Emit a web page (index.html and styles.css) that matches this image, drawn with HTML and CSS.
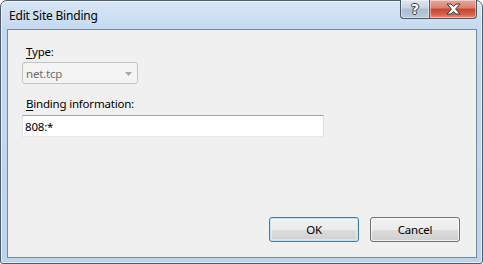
FILE: index.html
```html
<!DOCTYPE html>
<html>
<head>
<meta charset="utf-8">
<link rel="stylesheet" href="styles.css">
</head>
<body>
<div class="window">
  <div class="titlebar">
    <span class="title">Edit Site Binding</span>
    <div class="controls">
      <div class="ctl help"><span class="help-glyph">?</span></div>
      <div class="ctl close">
        <svg width="15" height="12" viewBox="0 0 15 12">
          <polygon points="1,1 5,1 7.5,3.6 10,1 14,1 9.6,6 14,11 10,11 7.5,8.4 5,11 1,11 5.4,6" fill="#ffffff" stroke="#3b3b3b" stroke-width="1" stroke-linejoin="round"/>
        </svg>
      </div>
    </div>
  </div>
  <div class="client">
    <div class="form">
      <label class="label"><u>T</u>ype:</label>
      <div class="select">
        <span>net.tcp</span>
        <svg class="arrow" width="7" height="4" viewBox="0 0 7 4"><polygon points="0,0 7,0 3.5,4" fill="#a8a8a8"/></svg>
      </div>
      <label class="label label-bind"><u>B</u>inding information:</label>
      <div class="input">808:*</div>
    </div>
    <div class="buttons">
      <div class="btn btn-default">OK</div>
      <div class="btn">Cancel</div>
    </div>
  </div>
</div>
</body>
</html>
```
FILE: styles.css
```css
html, body {
  margin: 0;
  padding: 0;
  background: #ffffff;
}
body {
  font-family: "Noto Sans", "Open Sans", sans-serif;
  font-size: 11.5px;
  letter-spacing: -0.2px;
  color: #000;
}
.window {
  box-sizing: border-box;
  width: 483px;
  height: 264px;
  border: 1px solid #4f5d6e;
  border-radius: 7px 7px 3px 3px;
  background: linear-gradient(180deg, #d7e6f6 0px, #c4d9ef 30px, #bcd4ee 100%);
  box-shadow: inset 0 0 0 1px rgba(255,255,255,0.6);
  padding: 0 5px 5px 6px;
  display: flex;
  flex-direction: column;
}
.titlebar {
  height: 28px;
  display: flex;
  justify-content: space-between;
  align-items: flex-start;
}
.title {
  margin-top: 7px;
  margin-left: 2px;
  font-size: 12px;
  line-height: 16px;
  color: #000;
}
.controls {
  display: flex;
  margin-top: -1px;
}
.ctl {
  height: 19px;
  box-sizing: border-box;
  border: 1px solid #4b5868;
  border-top: none;
  display: flex;
  align-items: center;
  justify-content: center;
  box-shadow: inset 0 0 0 1px rgba(255,255,255,0.45);
}
.help {
  width: 29px;
  border-right: none;
  border-radius: 0 0 0 4px;
  background: linear-gradient(180deg, #dde7f2 0%, #c7d5e4 45%, #aebed1 50%, #b9cadc 100%);
}
.close {
  width: 48px;
  border-radius: 0 0 4px 0;
  background: linear-gradient(180deg, #e9a99c 0%, #dc7f6c 45%, #c8432f 50%, #d3614c 80%, #e3937f 100%);
}
.help-glyph {
  font-family: "DejaVu Sans", sans-serif;
  font-weight: bold;
  font-size: 14px;
  line-height: 14px;
  letter-spacing: 0;
  color: #ffffff;
  text-shadow: -1px 0 #3b3b3b, 1px 0 #3b3b3b, 0 -1px #3b3b3b, 0 1px #3b3b3b;
}
.client {
  flex: 1;
  background: #f0f0f0;
  border: 1px solid #7a8797;
  display: flex;
  flex-direction: column;
  justify-content: space-between;
}
.form {
  display: flex;
  flex-direction: column;
  align-items: flex-start;
  padding: 14px 0 0 14px;
}
.label {
  display: block;
  margin-left: 4px;
  line-height: 16px;
}
.label u {
  text-decoration-thickness: 1px;
  text-underline-offset: 2px;
}
.select {
  box-sizing: border-box;
  width: 116px;
  height: 22px;
  margin-top: 2px;
  border: 1px solid #c3c3c3;
  border-radius: 3px;
  background: #f4f4f4;
  color: #6d6d6d;
  display: flex;
  align-items: center;
  justify-content: space-between;
  padding: 0 5px 0 3px;
}
.select .arrow {
  margin-top: 1px;
}
.label-bind {
  margin-top: 12px;
}
.input {
  box-sizing: border-box;
  width: 302px;
  height: 22px;
  margin-top: 3px;
  border: 1px solid #abadb3;
  border-top-color: #a0a4ab;
  border-bottom-color: #e3e9ef;
  border-left-color: #e2e3ea;
  border-right-color: #dbdfe6;
  background: #ffffff;
  display: flex;
  align-items: center;
  padding: 0 2px;
  color: #000;
}
.buttons {
  display: flex;
  justify-content: flex-end;
  gap: 11px;
  padding: 0 16px 15px 0;
}
.btn {
  box-sizing: border-box;
  width: 90px;
  height: 25px;
  border: 1px solid #707070;
  border-radius: 3px;
  background: linear-gradient(180deg, #f2f2f2 0%, #ebebeb 50%, #dddddd 51%, #cfcfcf 100%);
  box-shadow: inset 0 0 0 1px rgba(255,255,255,0.7);
  display: flex;
  align-items: center;
  justify-content: center;
  color: #000;
}
.btn-default {
  border-color: #3c7fb1;
  box-shadow: inset 0 0 0 1px #bfe4f9, inset 0 0 0 2px rgba(255,255,255,0.4);
}
```
